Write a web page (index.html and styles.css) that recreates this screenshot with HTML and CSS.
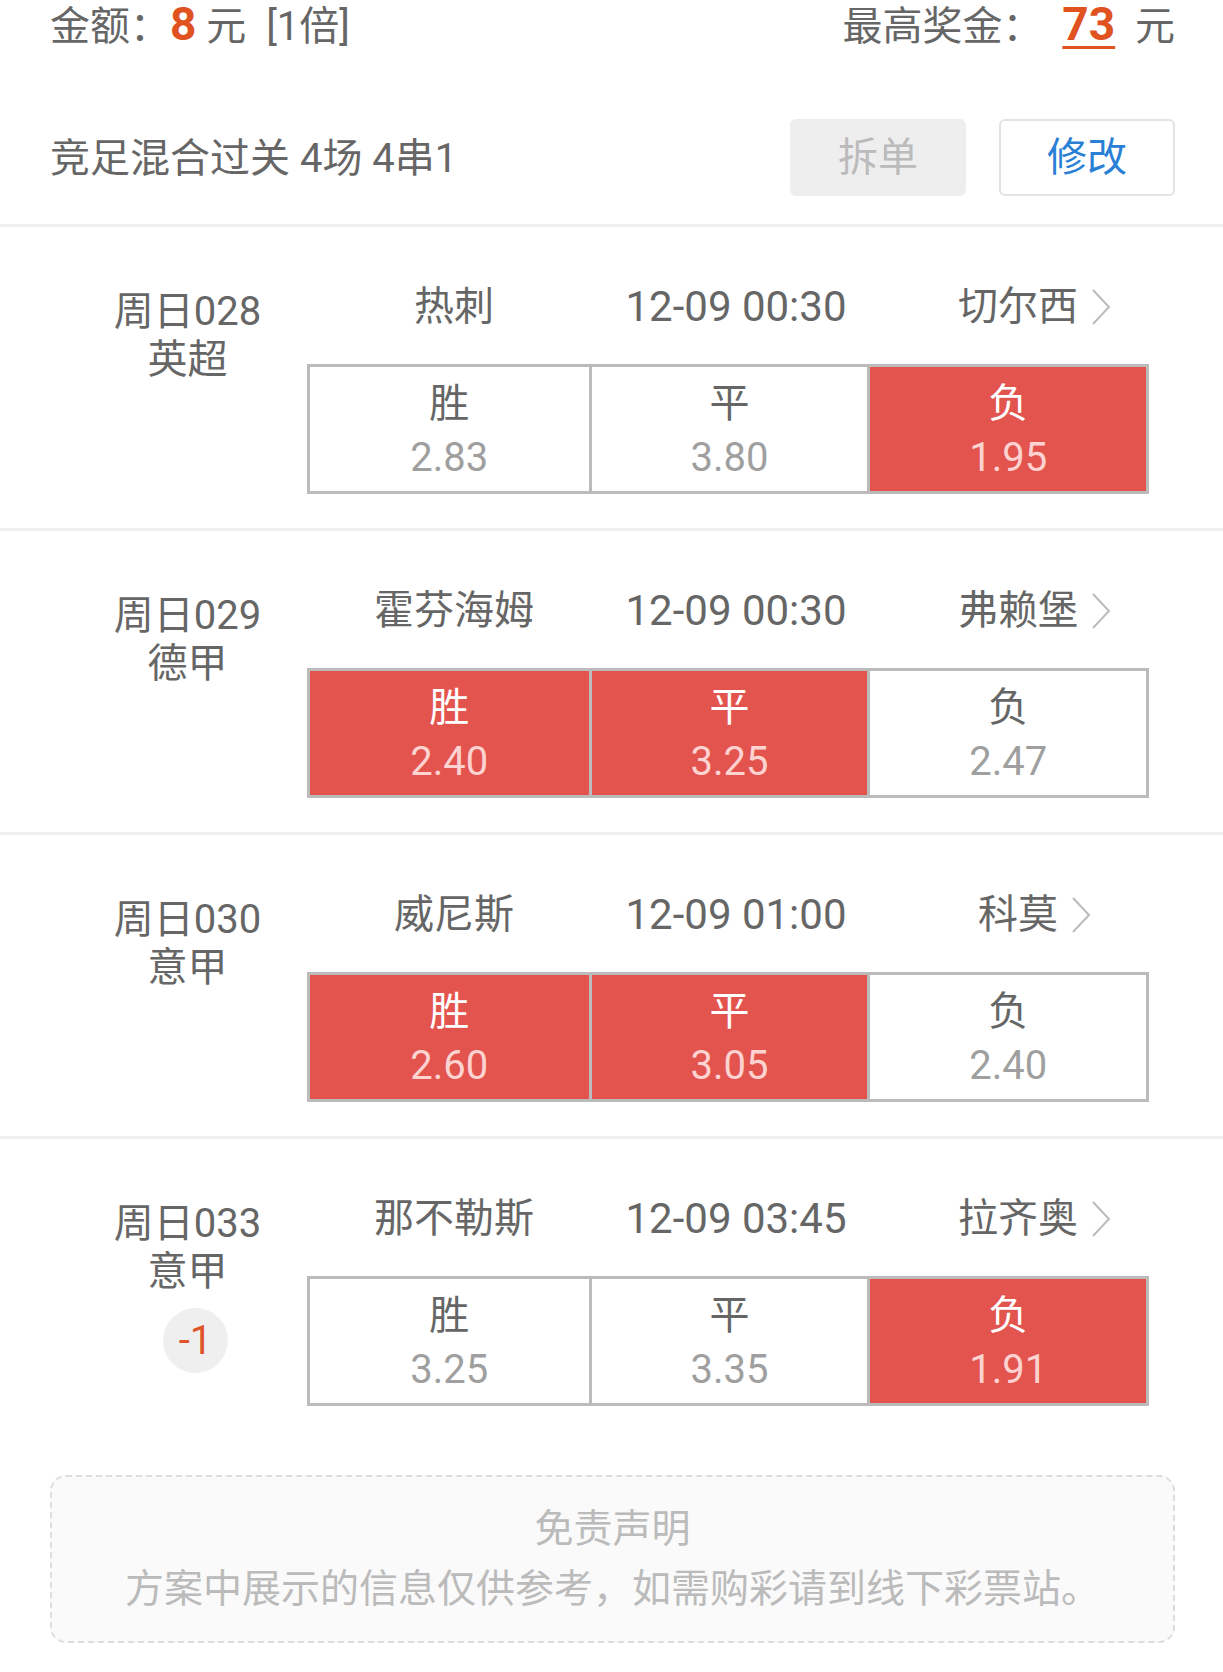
FILE: index.html
```html
<!DOCTYPE html>
<html lang="zh-CN">
<head>
  <meta charset="UTF-8">
  <title>方案详情</title>
  <link rel="stylesheet" href="styles.css">
</head>
<body>
  <div class="summary">
    <div class="summary-top">
      <div>金额：<span class="money">8</span> 元 &nbsp;[1倍]</div>
      <div>最高奖金： &nbsp;<span class="money prize">73</span>&nbsp; 元</div>
    </div>
    <div class="summary-bottom">
      <div class="play">竞足混合过关 4场 4串1</div>
      <div class="btn btn-off">拆单</div>
      <div class="btn btn-edit">修改</div>
    </div>
  </div>

  <div class="match">
    <div class="match-label">周日028<br>英超</div>
    <div class="match-main">
      <div class="teams">
        <span>热刺</span>
        <span class="time">12-09 00:30</span>
        <span class="away">切尔西 <svg class="chev" width="22" height="38" viewBox="0 0 22 38"><polyline points="3,2 19,19 3,36"/></svg></span>
      </div>
      <div class="odds">
        <div class="cell"><b>胜</b><i>2.83</i></div>
        <div class="cell"><b>平</b><i>3.80</i></div>
        <div class="cell on"><b>负</b><i>1.95</i></div>
      </div>
    </div>
  </div>

  <div class="match">
    <div class="match-label">周日029<br>德甲</div>
    <div class="match-main">
      <div class="teams">
        <span>霍芬海姆</span>
        <span class="time">12-09 00:30</span>
        <span class="away">弗赖堡 <svg class="chev" width="22" height="38" viewBox="0 0 22 38"><polyline points="3,2 19,19 3,36"/></svg></span>
      </div>
      <div class="odds">
        <div class="cell on"><b>胜</b><i>2.40</i></div>
        <div class="cell on"><b>平</b><i>3.25</i></div>
        <div class="cell"><b>负</b><i>2.47</i></div>
      </div>
    </div>
  </div>

  <div class="match">
    <div class="match-label">周日030<br>意甲</div>
    <div class="match-main">
      <div class="teams">
        <span>威尼斯</span>
        <span class="time">12-09 01:00</span>
        <span class="away">科莫 <svg class="chev" width="22" height="38" viewBox="0 0 22 38"><polyline points="3,2 19,19 3,36"/></svg></span>
      </div>
      <div class="odds">
        <div class="cell on"><b>胜</b><i>2.60</i></div>
        <div class="cell on"><b>平</b><i>3.05</i></div>
        <div class="cell"><b>负</b><i>2.40</i></div>
      </div>
    </div>
  </div>

  <div class="match last">
    <div class="match-label">周日033<br>意甲
      <div class="handicap">-1</div>
    </div>
    <div class="match-main">
      <div class="teams">
        <span>那不勒斯</span>
        <span class="time">12-09 03:45</span>
        <span class="away">拉齐奥 <svg class="chev" width="22" height="38" viewBox="0 0 22 38"><polyline points="3,2 19,19 3,36"/></svg></span>
      </div>
      <div class="odds">
        <div class="cell"><b>胜</b><i>3.25</i></div>
        <div class="cell"><b>平</b><i>3.35</i></div>
        <div class="cell on"><b>负</b><i>1.91</i></div>
      </div>
    </div>
  </div>

  <div class="notice">
    <div>免责声明</div>
    <div>方案中展示的信息仅供参考，如需购彩请到线下彩票站。</div>
  </div>
</body>
</html>
```

FILE: styles.css
```css
body {
  margin: 0;
  width: 1223px;
  font-family: Roboto, "Noto Sans CJK SC", sans-serif;
  font-size: 40px;
  color: #666;
  background: #fff;
}
.summary {
  padding: 0 48px 0 50px;
  border-bottom: 3px solid #f0f0f0;
}
.summary-top {
  display: flex;
  justify-content: space-between;
  height: 54px;
  line-height: 54px;
}
.money {
  color: #e0521f;
  font-weight: bold;
  font-size: 46px;
  line-height: 40px;
}
.prize {
  text-decoration: underline;
  text-decoration-thickness: 3px;
  text-underline-offset: 6px;
}
.summary-bottom {
  display: flex;
  align-items: center;
  gap: 33px;
  padding: 65px 0 28px;
}
.play {
  flex: 1;
  margin-top: -6px;
}
.btn {
  box-sizing: border-box;
  width: 176px;
  height: 77px;
  line-height: 73px;
  text-align: center;
  border-radius: 6px;
}
.btn-off {
  background: #eee;
  color: #bbb;
  border: 2px solid #eee;
}
.btn-edit {
  color: #2a80d5;
  border: 2px solid #e3e3e3;
}
.match {
  display: flex;
  padding: 55px 0 34px;
  border-bottom: 3px solid #f0f0f0;
}
.match.last {
  border-bottom: none;
  padding-bottom: 0;
}
.match-label {
  box-sizing: border-box;
  width: 307px;
  padding: 6px 0 0 68px;
  line-height: 48px;
  text-align: center;
}
.handicap {
  width: 65px;
  height: 65px;
  margin: 12px 0 0 95px;
  border-radius: 50%;
  background: #efefef;
  color: #e0542a;
  font-size: 40px;
  line-height: 65px;
  text-align: center;
}
.match-main {
  width: 842px;
}
.teams {
  display: grid;
  grid-template-columns: repeat(3, 1fr);
  padding-left: 8px;
  line-height: 50px;
  text-align: center;
  margin-bottom: 32px;
}
.time {
  font-size: 42px;
  padding-left: 8px;
}
.away {
  display: flex;
  align-items: center;
  justify-content: center;
  gap: 12px;
  padding-left: 50px;
}
.chev {
  fill: none;
  stroke: #bbb;
  stroke-width: 2;
}
.odds {
  display: grid;
  grid-template-columns: repeat(3, 1fr);
  border: 3px solid #bbb;
}
.cell {
  padding: 10px 0 6px;
  text-align: center;
  line-height: 54px;
}
.cell + .cell {
  border-left: 3px solid #bbb;
}
.cell b {
  display: block;
  font-weight: normal;
  color: #666;
}
.cell i {
  display: block;
  font-style: normal;
  color: #9f9f9f;
}
.cell.on {
  background: #e3544f;
}
.cell.on b {
  color: #fff;
}
.cell.on i {
  color: #fcd3d1;
}
.notice {
  margin: 69px 48px 0 50px;
  padding: 22px 0;
  border: 2px dashed #ddd;
  border-radius: 16px;
  background: #fafafa;
  color: #bbb;
  font-size: 39px;
  text-align: center;
  line-height: 60px;
}
```
